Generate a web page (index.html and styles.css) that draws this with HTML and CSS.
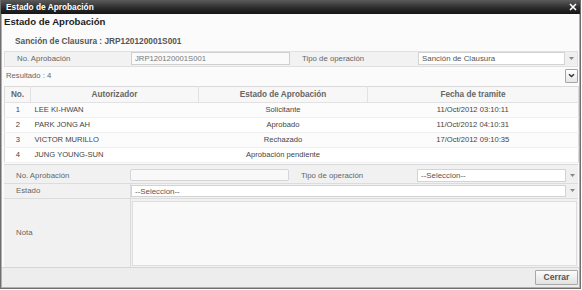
FILE: index.html
```html
<!DOCTYPE html>
<html>
<head>
<meta charset="utf-8">
<link rel="stylesheet" href="styles.css">
</head>
<body>
<div class="win">
  <div class="titlebar">
    <span class="ttl">Estado de Aprobación</span>
    <svg class="close" width="8" height="8" viewBox="0 0 8 8"><path d="M1 1L7 7M7 1L1 7" stroke="#fff" stroke-width="1.6"/></svg>
  </div>
  <div class="content">
    <h1 class="heading">Estado de Aprobación</h1>
    <div class="sub">Sanción de Clausura : JRP120120001S001</div>

    <div class="frow">
      <div class="lbl">No. Aprobación</div>
      <div class="fld"><div class="inp">JRP120120001S001</div></div>
      <div class="lbl">Tipo de operación</div>
      <div class="fld"><div class="sel"><span class="seltext">Sanción de Clausura</span><span class="arr"><svg width="5" height="3" viewBox="0 0 5 3"><path d="M0 0H5L2.5 3Z" fill="#888"/></svg></span></div></div>
    </div>

    <div class="resbar">
      <span>Resultado : 4</span>
      <span class="dd"><svg width="7" height="5" viewBox="0 0 7 5"><path d="M1 1.2L3.5 3.6L6 1.2" stroke="#333" stroke-width="1.4" fill="none"/></svg></span>
    </div>

    <table class="grid">
      <colgroup><col class="c1"><col class="c2"><col class="c3"><col class="c4"></colgroup>
      <thead>
        <tr><th>No.</th><th>Autorizador</th><th>Estado de Aprobación</th><th>Fecha de tramite</th></tr>
      </thead>
      <tbody>
        <tr><td class="n">1</td><td class="nm">LEE KI-HWAN</td><td class="ct">Solicitante</td><td class="ct">11/Oct/2012 03:10:11</td></tr>
        <tr><td class="n">2</td><td class="nm">PARK JONG AH</td><td class="ct">Aprobado</td><td class="ct">11/Oct/2012 04:10:31</td></tr>
        <tr><td class="n">3</td><td class="nm">VICTOR MURILLO</td><td class="ct">Rechazado</td><td class="ct">17/Oct/2012 09:10:35</td></tr>
        <tr><td class="n">4</td><td class="nm">JUNG YOUNG-SUN</td><td class="ct">Aprobación pendiente</td><td class="ct"></td></tr>
      </tbody>
    </table>

    <div class="form2">
      <div class="r2 ra">
        <div class="lbl">No. Aprobación</div>
        <div class="fld"><div class="inp inp2"></div></div>
        <div class="lbl">Tipo de operación</div>
        <div class="fld"><div class="sel"><span class="seltext">--Seleccion--</span><span class="arr"><svg width="5" height="3" viewBox="0 0 5 3"><path d="M0 0H5L2.5 3Z" fill="#888"/></svg></span></div></div>
      </div>
      <div class="r2 rb">
        <div class="lbl">Estado</div>
        <div class="fld"><div class="sel"><span class="seltext">--Seleccion--</span><span class="arr"><svg width="5" height="3" viewBox="0 0 5 3"><path d="M0 0H5L2.5 3Z" fill="#888"/></svg></span></div></div>
      </div>
      <div class="r2 rc">
        <div class="lbl">Nota</div>
        <div class="fld"><div class="ta"></div></div>
      </div>
    </div>
  </div>
  <div class="footer">
    <button class="btn">Cerrar</button>
  </div>
</div>
</body>
</html>
```

FILE: styles.css
```css
* { box-sizing: border-box; margin: 0; padding: 0; }
html, body { background: #fff; }
body {
  font-family: "Liberation Sans", Arial, sans-serif;
  font-size: 7.7px;
  color: #444;
}
.win {
  width: 581px;
  height: 289px;
  border: 1px solid #6e6e6e;
  border-top: 0;
  box-shadow: inset 1px 0 #b0b0b0, inset -1px 0 #b0b0b0, inset 0 -1px #b0b0b0;
  background: #fbfbfb;
  display: flex;
  flex-direction: column;
}
.titlebar {
  height: 14px;
  background: linear-gradient(#5b5b5b, #2a2a2a 60%, #151515);
  color: #fff;
  font-weight: bold;
  font-size: 8.3px;
  display: flex;
  align-items: center;
  justify-content: space-between;
  padding: 0 3px 0 5px;
}
.close { display: block; }
.content {
  flex: 1;
  display: flex;
  flex-direction: column;
  padding: 0 2px 0 3px;
}
.heading {
  font-size: 9.6px;
  font-weight: bold;
  color: #1e1e1e;
  line-height: 14px;
  margin-top: 1px;
}
.sub {
  font-weight: bold;
  font-size: 8.3px;
  color: #555;
  line-height: 14px;
  margin-top: 5px;
  padding-left: 11px;
}
.frow {
  margin-top: 3px;
  height: 16px;
  display: grid;
  grid-template-columns: 126px 160px 125px 1fr;
  background: #f2f2f2;
  border: 1px solid #e0e0e0;
  align-items: center;
}
.lbl { padding-left: 12px; color: #666; font-size: 7.8px; }
.frow .lbl:nth-child(3) { padding-left: 11px; }
.fld { display: flex; align-items: center; }
.inp {
  flex: 1;
  height: 13px;
  border: 1px solid #cfcfcf;
  background: #fafafa;
  color: #777;
  line-height: 11px;
  padding-left: 3px;
  margin-right: 1px;
}
.sel {
  flex: 1;
  height: 13px;
  display: flex;
  margin-left: 2px;
}
.seltext {
  flex: 1;
  border: 1px solid #d3d3d3;
  background: #fff;
  line-height: 11px;
  padding-left: 3px;
  color: #555;
  font-size: 7.9px;
}
.arr {
  width: 12px;
  display: flex;
  align-items: center;
  justify-content: center;
  background: #efefef;
}
.resbar {
  height: 19px;
  display: flex;
  align-items: center;
  justify-content: space-between;
  color: #666;
  padding-left: 2px;
  padding-bottom: 1px;
}
.dd {
  width: 13px;
  height: 14px;
  border: 1px solid #a5a5a5;
  border-radius: 1px;
  background: linear-gradient(#fff, #e6e6e6);
  display: flex;
  align-items: center;
  justify-content: center;
}
.grid {
  width: 574px;
  border-collapse: collapse;
  table-layout: fixed;
  border: 1px solid #dadada;
  background: #fff;
}
.c1 { width: 26px; }
.c2 { width: 168px; }
.c3 { width: 169px; }
.c4 { width: 211px; }
.grid th {
  height: 16px;
  background: #f7f7f7;
  color: #666;
  font-weight: bold;
  font-size: 8.2px;
  border-left: 1px solid #e2e2e2;
  border-bottom: 1px solid #e2e2e2;
}
.grid th:first-child { border-left: 0; }
.grid td {
  height: 15px;
  border-bottom: 1px solid #f0f0f0;
  padding: 0;
  color: #444;
  font-size: 7.6px;
  white-space: nowrap;
}
.grid tbody tr:nth-child(odd) td { background: #fcfcfc; }
.grid td.n { text-align: center; }
.grid td.nm { padding-left: 4px; }
.grid td.ct { text-align: center; }
.form2 {
  margin-top: 1px;
  border-top: 1px solid #d9d9d9;
  background: #f1f1f1;
  padding-top: 3px;
  display: flex;
  flex-direction: column;
}
.r2 {
  display: grid;
  align-items: center;
}
.ra { height: 15px; grid-template-columns: 126px 160px 125px 1fr; }
.ra .inp2 { border-radius: 2px; height: 12px; background: #f9f9f9; border-color: #d5d5d5; }
.ra .lbl:nth-child(3) { padding-left: 11px; }
.rb {
  height: 15px;
  grid-template-columns: 126px 1fr;
  border-top: 1px solid #dcdcdc;
}
.rb .sel { margin-left: 0; height: 12px; }
.rb .fld { height: 100%; border-left: 1px solid #dcdcdc; }
.rc {
  height: 69px;
  grid-template-columns: 126px 1fr;
  border-top: 1px solid #dcdcdc;
}
.rc .fld { height: 100%; border-left: 1px solid #dcdcdc; padding: 2px 1px 1px 1px; }
.ta {
  flex: 1;
  height: 100%;
  background: #f9f9f9;
  border: 1px solid #dedede;
}
.footer {
  height: 21px;
  background: #ededed;
  border-top: 1px solid #d6d6d6;
  margin: 0 1px 1px 1px;
  display: flex;
  align-items: center;
  justify-content: flex-end;
  padding-right: 1px;
}
.btn {
  width: 43px;
  height: 15px;
  border: 1px solid #a8a8a8;
  border-radius: 1px;
  background: linear-gradient(#fbfbfb, #e2e2e2);
  font-family: "Liberation Sans", Arial, sans-serif;
  font-weight: bold;
  font-size: 8.6px;
  color: #555;
}
```
